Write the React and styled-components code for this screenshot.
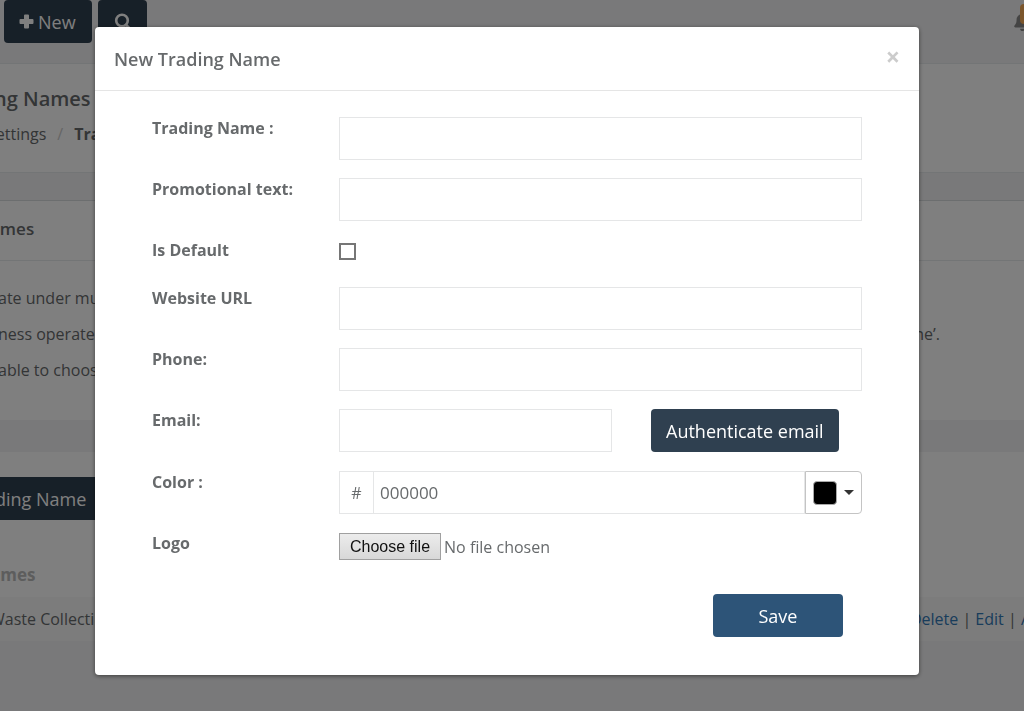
import React, { useRef, useState } from 'react';
import styled, { createGlobalStyle } from 'styled-components';
import { FaBell } from 'react-icons/fa';

const GlobalStyle = createGlobalStyle`
    * {
        box-sizing:border-box;
    }

    body {
        margin:0;
        background:#f3f3f4;
        color:#676a6c;
        font-family:"Open Sans", "Liberation Sans", sans-serif;
        font-size:16px;
        line-height:24px;
        overflow:hidden;
    }

    button, input {
        font-family:inherit;
        font-size:inherit;
        line-height:inherit;
        color:inherit;
    }
`;

/* page behind the dialog */

const Page = styled.div`
    min-height:100vh;
    margin-left:-10px;
    overflow:hidden;
`;

const TopBar = styled.header`
    display:flex;
    align-items:flex-start;
    gap:6px;
    height:64px;
    padding-left:14px;
    border-bottom:1px solid #e7eaec;
`;

const NavButton = styled.button`
    display:flex;
    align-items:center;
    gap:4px;
    height:43px;
    padding:0 16px 0 15px;
    border:0;
    border-radius:4px;
    background:#2f4050;
    color:#fff;
    font-size:18px;
`;

const Alerts = styled.div`
    display:flex;
    margin:4px -20px 0 auto;

    & > svg {
        margin-top:8px;
        color:#888;
    }
`;

const Badge = styled.span`
    width:24px;
    height:20px;
    margin-left:-12px;
    border-radius:4px;
    background:#f8ac59;
`;

const PageHeading = styled.section`
    height:109px;
    padding:20px 0 0 4px;
    background:#fff;
    border-bottom:1px solid #e7eaec;

    & > h2 {
        margin:0;
        font-size:20px;
        line-height:30px;
        font-weight:600;
    }
`;

const Crumbs = styled.nav`
    display:flex;
    gap:11px;
    margin:8px 0 0 -7px;

    & > a {
        color:inherit;
        text-decoration:none;
    }

    & > i {
        color:#ccc;
        font-style:normal;
    }
`;

const Card = styled.section`
    margin-top:${p => p.$gap}px;
    padding-top:${p => p.$pad || 0}px;
    background:#fff;
    border-top:${p => p.$line ? '1px solid #d9dcde' : '0'};
`;

const CardTitle = styled.h5`
    margin:0;
    height:60px;
    padding-top:16px;
    border-bottom:1px solid #e7eaec;
    font-size:17px;
    font-weight:600;
`;

const CardText = styled.div`
    height:159px;
    padding:25px 84px 0 8px;
`;

const Line = styled.p`
    display:flex;
    justify-content:space-between;
    margin:0 0 12px;
`;

const AddButton = styled.button`
    display:block;
    height:43px;
    padding:0 16px 0 5px;
    border:0;
    background:#2f4050;
    color:#fff;
    font-size:18px;
    width:150px;
    text-align:left;
`;

const Table = styled.table`
    width:calc(100% + 7px);
    margin-top:36px;
    border-collapse:collapse;
    text-align:left;

    th {
        height:41px;
        padding:0 0 3px;
        color:#bbb;
        font-size:17px;
        font-weight:700;
    }

    td {
        height:44px;
        padding:0;
        background:#f9f9f9;
    }

    td:last-child {
        width:119px;
        white-space:nowrap;
    }

    a {
        color:#337ab7;
        text-decoration:none;
    }
`;

/* dialog */

const Backdrop = styled.div`
    position:fixed;
    inset:0;
    display:flex;
    align-items:flex-start;
    padding:27px 105px 0 95px;
    background:rgba(0, 0, 0, 0.5);
`;

const Modal = styled.div`
    flex:1;
    background:#fff;
    border-radius:4px;
    box-shadow:0 1px 4px rgba(0, 0, 0, 0.5);
`;

const ModalHeader = styled.div`
    display:flex;
    align-items:center;
    justify-content:space-between;
    height:64px;
    padding:0 19px;
    border-bottom:1px solid #e5e5e5;

    & > h4 {
        margin:0;
        font-size:18px;
        font-weight:600;
    }
`;

const Close = styled.button`
    padding:0 0 5px;
    border:0;
    background:none;
    color:#ccc;
    font-size:25px;
    font-weight:700;
`;

const Form = styled.form`
    padding:26px 57px 38px;
`;

const Row = styled.div`
    display:grid;
    grid-template-columns:187px 1fr;
    align-items:start;
    min-height:${p => p.$height || 43}px;
    margin-bottom:18px;

    & > label {
        font-weight:700;
        line-height:22px;
    }
`;

const Input = styled.input`
    flex:1;
    width:100%;
    min-width:0;
    height:43px;
    padding:0 6px;
    border:1px solid #e5e6e7;
    border-radius:0;
    background:#fff;
    font-size:17px;
`;

const Checkbox = styled.input`
    appearance:none;
    width:17px;
    height:17px;
    margin:4px 0 0;
    border:2px solid #767676;
    background:#fff;

    &:checked {
        background:#767676;
    }
`;

const EmailGroup = styled.div`
    display:grid;
    grid-template-columns:273px auto;
    justify-content:start;
    gap:39px;
`;

const Button = styled.button`
    height:43px;
    padding:0 15px;
    border:0;
    border-radius:4px;
    background:${p => p.$primary ? '#2d5478' : '#2f4050'};
    color:#fff;
    font-size:18px;
    min-width:${p => p.$primary ? 130 : 0}px;
`;

const ColorGroup = styled.div`
    display:flex;
`;

const Addon = styled.span`
    display:flex;
    align-items:center;
    justify-content:center;
    width:34px;
    border:1px solid #e5e6e7;
    border-right:0;
`;

const Picker = styled.button`
    display:flex;
    align-items:center;
    gap:7px;
    width:57px;
    padding:0 7px;
    border:1px solid #c4c4c4;
    border-radius:0 4px 4px 0;
    background:#fff;
`;

const Swatch = styled.span`
    width:24px;
    height:24px;
    border:1px solid #aaa;
    border-radius:4px;
    background:#000;
`;

const Caret = styled.span`
    border:5px solid transparent;
    border-top-color:#333;
    border-bottom:0;
`;

const FileGroup = styled.div`
    display:flex;
    align-items:center;
    gap:3px;
    padding-top:1px;
    line-height:22px;
`;

const FileButton = styled.button`
    height:27px;
    padding:0 10px;
    border:1px solid #a0a0a0;
    background:linear-gradient(#ececec, #d8d8d8);
    color:#111;
    font-family:"Liberation Sans", Arial, sans-serif;
    white-space:nowrap;
`;

const Footer = styled.div`
    display:flex;
    justify-content:flex-end;
    padding:1px 19px 0 0;
`;

const PlusIcon = () => (
    <svg width="15" height="15" viewBox="0 0 15 15" fill="currentColor" aria-hidden="true">
        <path d="M6 .5h3q1 0 1 1V5h3.500q1 0 1 1v3q0 1-1 1H10v3.500q0 1-1 1H6q-1 0-1-1V10H1.500q-1 0-1-1V6q0-1 1-1H5V1.500q0-1 1-1z" />
    </svg>
);

const SearchIcon = () => (
    <svg width="18" height="17" viewBox="0 0 18 17" fill="none" stroke="currentColor" aria-hidden="true">
        <circle cx="9" cy="7.500" r="5.800" strokeWidth="2.600" />
        <path d="M13 12l3.500 3.500" strokeWidth="3" strokeLinecap="round" />
    </svg>
);

const Field = ({ id, label, type }) => (
    <Row>
        <label htmlFor={id}>{label}</label>
        <Input id={id} type={type || 'text'} />
    </Row>
);

const Background = () => (
    <Page>
        <TopBar>
            <NavButton><PlusIcon />New</NavButton>
            <NavButton aria-label="Search"><SearchIcon /></NavButton>
            <Alerts>
                <FaBell size={19} />
                <Badge />
            </Alerts>
        </TopBar>
        <PageHeading>
            <h2>ng Names</h2>
            <Crumbs>
                <a href="#settings">Settings</a>
                <i>/</i>
                <b>Trading</b>
            </Crumbs>
        </PageHeading>
        <Card $gap={27} $line>
            <CardTitle>ames</CardTitle>
            <CardText>
                <Line>ate under mul</Line>
                <Line><span>ness operate</span><span>ne’.</span></Line>
                <Line>able to choose</Line>
            </CardText>
        </Card>
        <Card $gap={32} $pad={25}>
            <AddButton>ding Name</AddButton>
            <Table>
                <thead>
                    <tr><th>ames</th><th></th></tr>
                </thead>
                <tbody>
                    <tr>
                        <td>Waste Collecti</td>
                        <td><a href="#delete">Delete</a> | <a href="#edit">Edit</a> | <a href="#a">A</a></td>
                    </tr>
                </tbody>
            </Table>
        </Card>
    </Page>
);

const App = () => {
    const [color, setColor] = useState('000000');
    const [file, setFile] = useState(null);
    const fileInput = useRef(null);

    return <>
        <GlobalStyle />
        <Background />
        <Backdrop>
            <Modal role="dialog" aria-labelledby="dialog-title">
                <ModalHeader>
                    <h4 id="dialog-title">New Trading Name</h4>
                    <Close aria-label="Close">×</Close>
                </ModalHeader>
                <Form onSubmit={(e) => e.preventDefault()}>
                    <Field id="name" label="Trading Name :" />
                    <Field id="promo" label="Promotional text:" />
                    <Row $height={30}>
                        <label htmlFor="default">Is Default</label>
                        <Checkbox id="default" type="checkbox" />
                    </Row>
                    <Field id="url" label="Website URL" />
                    <Field id="phone" label="Phone:" type="tel" />
                    <Row $height={44}>
                        <label htmlFor="email">Email:</label>
                        <EmailGroup>
                            <Input id="email" type="email" />
                            <Button type="button">Authenticate email</Button>
                        </EmailGroup>
                    </Row>
                    <Row>
                        <label htmlFor="color">Color :</label>
                        <ColorGroup>
                            <Addon>#</Addon>
                            <Input id="color" type="text" value={color} onChange={(e) => {
                                setColor(e.target.value);
                            }} />
                            <Picker type="button" aria-label="Pick a color">
                                <Swatch style={{ background: '#' + color }} />
                                <Caret />
                            </Picker>
                        </ColorGroup>
                    </Row>
                    <Row>
                        <label htmlFor="logo">Logo</label>
                        <FileGroup>
                            <input id="logo" type="file" hidden ref={fileInput} onChange={(e) => {
                                setFile(e.target.files[0]);
                            }} />
                            <FileButton type="button" onClick={() => fileInput.current.click()}>Choose file</FileButton>
                            <span>{file ? file.name : 'No file chosen'}</span>
                        </FileGroup>
                    </Row>
                    <Footer>
                        <Button $primary>Save</Button>
                    </Footer>
                </Form>
            </Modal>
        </Backdrop>
    </>;
}

export default App;
